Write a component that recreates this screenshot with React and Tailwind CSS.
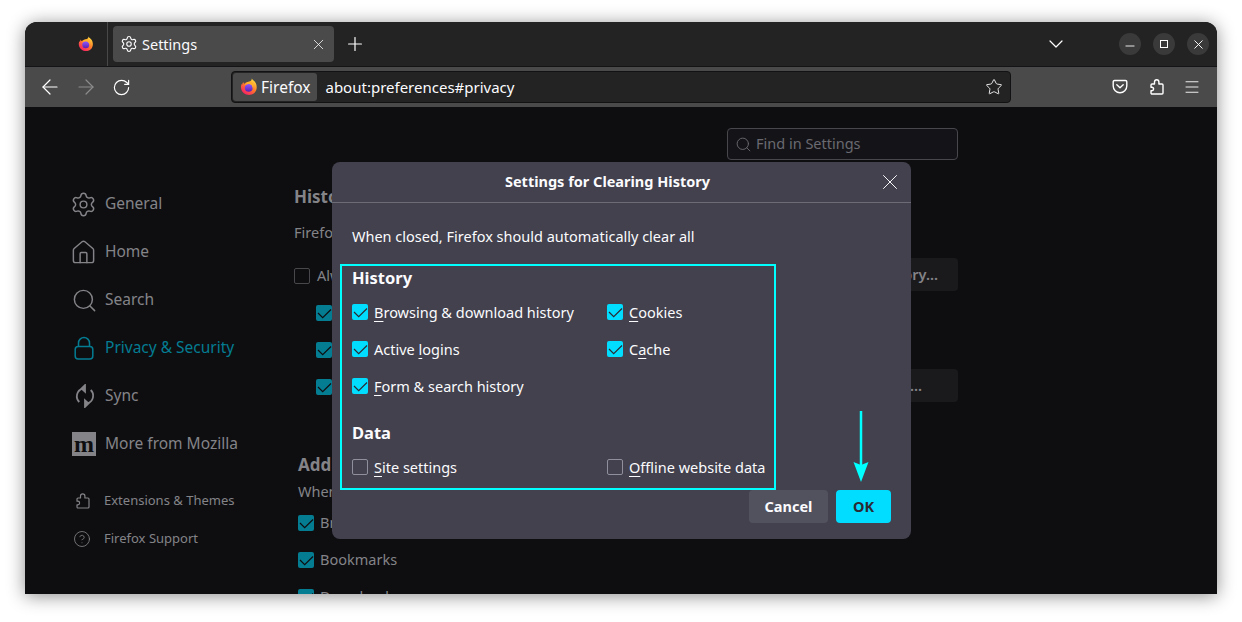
import React from "react";
import { X, Plus, ChevronDown, ArrowLeft, ArrowRight, RotateCw, Star, Settings, House, Search, CircleHelp, Menu, Minus } from "lucide-react";

const Fox = ({ s = 18, id = "a" }) => (
  <svg width={s} height={s} viewBox="0 0 32 32" className="shrink-0">
    <defs>
      <linearGradient id={id + "o"} x1="0.8" y1="0.1" x2="0.2" y2="1">
        <stop offset="0" stopColor="#ffd43a" />
        <stop offset="0.45" stopColor="#ff7a2a" />
        <stop offset="1" stopColor="#f5156c" />
      </linearGradient>
      <linearGradient id={id + "p"} x1="0.5" y1="0" x2="0.5" y2="1">
        <stop offset="0" stopColor="#9059ff" />
        <stop offset="1" stopColor="#5a1fb0" />
      </linearGradient>
    </defs>
    <path d="M21 1c1 3 5 4 7 8 3 6 2 14-3 18-5 4-13 4-18 0C2 23 0 16 3 10l1 2c0-2 1-4 2-5 0 2 1 3 2 3 2-3 6-3 8-3 2-1 5-2 5-6z" fill={`url(#${id}o)`} />
    <circle cx="15.500" cy="17.500" r="7" fill={`url(#${id}p)`} />
    <path d="M8 15c2-4 6-5 10-4 3 1 5 4 4 7 3-4 2-9-2-11-5-2-10 1-12 8z" fill="#ffb02a" />
  </svg>
);

const Box = ({ on, dim, className = "" }) => (
  <span
    className={`flex h-4 w-4 shrink-0 items-center justify-center rounded-[2px] ${
      on
        ? dim
          ? "bg-[#047c92]"
          : "bg-[#00ddff]"
        : dim
          ? "border border-[#48484c]"
          : "border border-[#8f8f9d]"
    } ${className}`}
  >
    {on && (
      <svg width="16" height="16" viewBox="0 0 16 16" fill="none" stroke="currentColor" strokeWidth="1.200" className={dim ? "text-[#0e0e11]" : "text-[#2b2a33]"}>
        <path d="M2 8l4.700 4.700L15 4.500" />
      </svg>
    )}
  </span>
);

const K = ({ children }) => <span className="underline decoration-1 underline-offset-[3px]">{children}</span>;

const Opt = ({ on, children, className = "" }) => (
  <label className={`flex h-4 items-center gap-[6px] text-[14.5px] text-[#fbfbfe] ${className}`}>
    <Box on={on} />
    <span className="whitespace-nowrap leading-4">{children}</span>
  </label>
);

const Nav = ({ icon, label, active }) => (
  <div className={`flex h-12 items-center ${active ? "text-[#047c92]" : "text-[#848488]"}`}>
    <span className="flex w-[33px] shrink-0 justify-start">{icon}</span>
    <span className="text-[15.5px] whitespace-nowrap">{label}</span>
  </div>
);

const Lock = () => (
  <svg width="24" height="24" viewBox="0 0 24 24" fill="none" stroke="currentColor" strokeWidth="1.500">
    <rect x="3.200" y="10.500" width="17.600" height="12.500" rx="3" />
    <path d="M6.500 10.500V7a5.500 5.500 0 0 1 11 0v3.500" />
  </svg>
);
const Sync = () => (
  <svg width="24" height="24" viewBox="0 0 24 24" fill="none" stroke="currentColor" strokeWidth="1.800" className="ml-px">
    <path d="M9.500 4.600A8 8 0 0 0 6.300 18" />
    <path d="M14.500 19.400A8 8 0 0 0 17.700 6" />
    <path d="M12 1.200 8.600 4.500 12 7.600z" fill="currentColor" />
    <path d="M12 22.800l3.400-3.300L12 16.400z" fill="currentColor" />
  </svg>
);
const Puzzle = ({ s = 16, w = 1.4 }) => (
  <svg width={s} height={s} viewBox="0 0 16 16" fill="none" stroke="currentColor" strokeWidth={w} strokeLinejoin="round">
    <path d="M5.500 3a2.200 2.200 0 0 1 4.400 0v2h3.100a1 1 0 0 1 1 1v8a1 1 0 0 1-1 1H3a1 1 0 0 1-1-1v-2.200h.8a1.800 1.800 0 0 0 0-3.600H2V6a1 1 0 0 1 1-1h2.500z" />
  </svg>
);
const Pocket = () => (
  <svg width="16" height="16" viewBox="0 0 16 16" fill="none" stroke="currentColor" strokeWidth="1.400" strokeLinejoin="round" strokeLinecap="round">
    <path d="M2.500 1.500h11c.7 0 1.300.5 1.300 1.200V7A6.800 6.800 0 0 1 1.200 7V2.700c0-.7.600-1.200 1.300-1.200z" />
    <path d="m4.800 5.800 3.200 3 3.200-3" />
  </svg>
);

export default function App() {
  return (
    <div className="h-[622px] w-[1242px] overflow-hidden bg-white pl-[25px] pt-[22px] font-['Noto_Sans',sans-serif]">
      <div className="relative flex h-[572px] w-[1192px] flex-col overflow-hidden rounded-t-[12px] bg-[#0e0e11] shadow-[0_2px_18px_rgba(0,0,0,0.45)]">
        {/* Tab strip */}
        <div className="flex h-[45px] shrink-0 items-center border-b border-[#141416] bg-[#232323]">
          <div className="flex h-full w-[83px] items-center justify-end border-r border-[#48484a] pr-[13px]">
            <Fox id="t" s={16} />
          </div>
          <div className="ml-[5px] flex h-9 w-[221px] items-center rounded-[4px] bg-[#4a4a4a] pl-[7px] pr-[7px] text-[#fbfbfe]">
            <Settings size={18} strokeWidth={1.500} />
            <span className="ml-1 pt-px text-[14.5px]">Settings</span>
            <X size={17} strokeWidth={1.100} className="ml-auto" />
          </div>
          <Plus size={22} strokeWidth={1.300} className="ml-[10px] text-white" />
          <ChevronDown size={24} strokeWidth={1.200} className="ml-[678px] text-white" />
          <div className="ml-[51px] flex gap-[12px]">
            <span className="flex h-[22px] w-[22px] items-center justify-center rounded-full bg-[#3a3a3a] text-white"><Minus size={14} strokeWidth={1.500} className="translate-y-[2px]" /></span>
            <span className="flex h-[22px] w-[22px] items-center justify-center rounded-full bg-[#3a3a3a]"><span className="h-2 w-2 border border-white" /></span>
            <span className="flex h-[22px] w-[22px] items-center justify-center rounded-full bg-[#3a3a3a] text-white"><X size={15} strokeWidth={1.500} /></span>
          </div>
        </div>
        {/* Toolbar */}
        <div className="flex h-[40px] shrink-0 items-center bg-[#4a4a4a]">
          <ArrowLeft size={24} strokeWidth={1.200} className="ml-[13px] text-white" />
          <ArrowRight size={24} strokeWidth={1.200} className="ml-3 text-[#8c8c8c]" />
          <RotateCw size={19} strokeWidth={1.500} className="ml-[14px] text-white" />
          <div className="ml-[100px] flex h-8 w-[780px] items-center rounded-[4px] border border-[#121214] bg-[#232323] pr-[7px] text-[#fbfbfe]">
            <div className="ml-px flex h-7 items-center rounded-[3px] bg-[#4a4a4a] pl-[7px] pr-[7px]">
              <Fox id="u" s={18} />
              <span className="ml-[3px] pt-px text-[15.5px]">Firefox</span>
            </div>
            <span className="ml-2 text-[15px]">about:preferences#privacy</span>
            <Star size={18} strokeWidth={1.200} className="ml-auto" />
          </div>
          <span className="ml-[101px] text-white"><Pocket /></span>
          <span className="ml-[21px] text-white"><Puzzle /></span>
          <Menu size={18} strokeWidth={1.200} className="ml-[18px] text-white" />
        </div>
        {/* Content */}
        <div className="flex min-h-0 flex-1">
          <aside className="w-[269px] shrink-0 pl-[47px] pt-[73px]">
            <Nav icon={<Settings size={27} strokeWidth={1.300} className="-ml-[2px]" />} label="General" />
            <Nav icon={<House size={27} strokeWidth={1.300} className="-ml-[2px]" />} label="Home" />
            <Nav icon={<Search size={27} strokeWidth={1.300} className="-ml-[1px]" />} label="Search" />
            <Nav active icon={<Lock />} label="Privacy & Security" />
            <Nav icon={<Sync />} label="Sync" />
            <Nav icon={<span className="flex h-6 w-6 items-center justify-center bg-[#848488] font-['Liberation_Serif',serif] text-[24px] leading-none font-bold text-[#0e0e11]">m</span>} label="More from Mozilla" />
            <div className="mt-[14px] flex h-[38px] items-center text-[13px] text-[#848488]">
              <span className="ml-[3px] w-[29px]"><Puzzle s={16} w={1.200} /></span>Extensions &amp; Themes
            </div>
            <div className="flex h-[38px] items-center text-[13px] text-[#848488]">
              <span className="ml-[1px] w-[31px]"><CircleHelp size={18} strokeWidth={1.100} /></span>Firefox Support
            </div>
          </aside>
          <main className="relative w-[664px] min-w-0 text-[#848488]">
            <div className="ml-[433px] mt-[21px] flex h-8 w-[231px] items-center rounded-[4px] border border-[#48484c] bg-[#141418] pl-[7px] text-[14.5px] text-[#6a6a70]">
              <Search size={17} strokeWidth={1.300} />
              <span className="ml-1">Find in Settings</span>
            </div>
            <h2 className="mt-[25px] text-[17px] font-bold leading-6">History</h2>
            <p className="mt-[13px] text-[14.5px] leading-5">Firefox will</p>
            <div className="mt-[26px] flex h-4 items-center gap-[7px] text-[14.5px]"><Box dim /><span>Always</span></div>
            <div className="ml-[22px] mt-[21px] flex flex-col gap-[21px]">
              <Box on dim /><Box on dim /><Box on dim />
            </div>
            <h2 className="ml-1 mt-[58px] text-[17px] font-bold leading-6">Address</h2>
            <p className="ml-1 mt-[4px] text-[14.5px] leading-5">When</p>
            <div className="ml-1 mt-[14px] flex h-4 items-center gap-[6px] text-[14.5px]"><Box on dim /><span>Browsing</span></div>
            <div className="ml-1 mt-[21px] flex h-4 items-center gap-[6px] text-[14.5px]"><Box on dim /><span>Bookmarks</span></div>
            <div className="ml-1 mt-[21px] flex h-4 items-center gap-[6px] text-[14.5px]"><Box on dim /><span>Downloads</span></div>
            <div className="absolute right-0 top-[151px] flex h-[33px] w-[200px] items-center justify-end rounded-[4px] bg-[#1a1a1d] pr-[20px] text-[14.5px] font-semibold">Settings for History…</div>
            <div className="absolute right-0 top-[262px] flex h-[33px] w-[200px] items-center justify-end rounded-[4px] bg-[#1a1a1d] pr-[36px] text-[14.5px] font-semibold">Exceptions…</div>
          </main>
        </div>

        {/* Dialog */}
        <div className="absolute left-[307px] top-[140px] flex h-[377px] w-[579px] flex-col rounded-[8px] bg-[#42414d]">
          <div className="relative flex h-[41px] shrink-0 items-center justify-center border-b border-[#6d6c76] pr-[28px] text-[14.5px] font-bold text-[#fbfbfe]">
            Settings for Clearing History
            <X size={26} strokeWidth={0.900} className="absolute right-2 top-[7px]" />
          </div>
          <p className="ml-5 mt-[23px] text-[14.5px] leading-5 text-[#fbfbfe]">When closed, Firefox should automatically clear all</p>
          <div className="ml-5 mt-[20px] text-[#fbfbfe]">
            <h3 className="text-[16.5px] font-bold leading-6">History</h3>
            <div className="mt-[14px] grid grid-cols-[255px_1fr] gap-y-[21px]">
              <Opt on><K>B</K>rowsing &amp; download history</Opt>
              <Opt on><K>C</K>ookies</Opt>
              <Opt on>Active <K>l</K>ogins</Opt>
              <Opt on>C<K>a</K>che</Opt>
              <Opt on><K>F</K>orm &amp; search history</Opt>
            </div>
            <h3 className="mt-[27px] text-[16.5px] font-bold leading-6">Data</h3>
            <div className="mt-[14px] grid grid-cols-[255px_1fr]">
              <Opt><K>S</K>ite settings</Opt>
              <Opt><K>O</K>ffline website data</Opt>
            </div>
          </div>
          <div className="ml-auto mt-auto mb-[16px] mr-5 flex gap-2 text-[14.5px] font-bold">
            <button className="h-[33px] w-[79px] rounded-[4px] bg-[#52525e] text-[#fbfbfe]">Cancel</button>
            <button className="h-[33px] w-[55px] rounded-[4px] bg-[#00ddff] text-[#2b2a33]">OK</button>
          </div>
        </div>

        {/* Annotation */}
        <div className="absolute left-[315px] top-[242px] h-[226px] w-[436px] border-2 border-[#00ffff]" />
        <svg className="absolute left-[826px] top-[388px]" width="20" height="74" viewBox="0 0 20 74">
          <path d="M10 1V56" stroke="#00ffff" strokeWidth="2.500" fill="none" />
          <path d="M2.500 52 10 72 17.500 52 10 55z" fill="#00ffff" />
        </svg>
      </div>
    </div>
  );
}
